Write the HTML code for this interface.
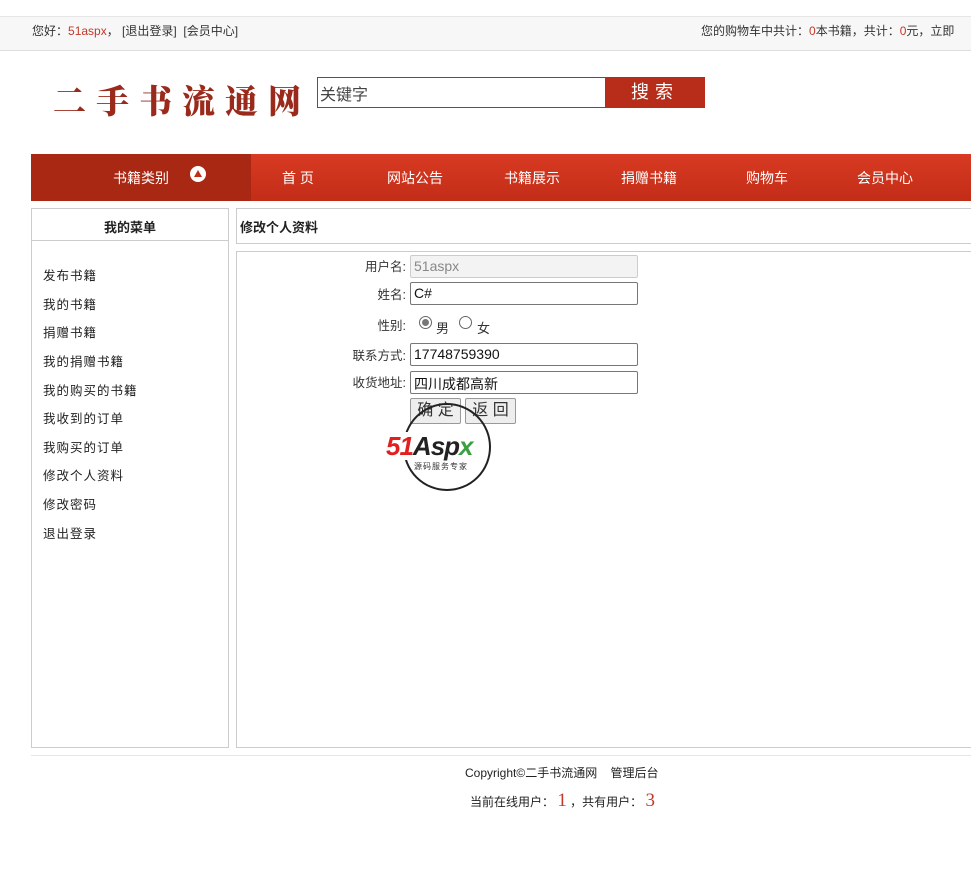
<!DOCTYPE html>
<html><head><meta charset="utf-8"><style>
*{margin:0;padding:0;box-sizing:border-box}
body{width:971px;height:894px;background:#fff;font-family:"Liberation Sans","Noto Sans CJK SC",sans-serif;font-size:12px;color:#333;position:relative;overflow:hidden}
.abs{position:absolute}
.top{left:0;top:16px;width:971px;height:35px;background:#f7f7f7;border-top:1px solid #e6e6e6;border-bottom:1px solid #ddd}
.red{color:#c0392b}
.nav{left:31px;top:154px;width:940px;height:47px;background:linear-gradient(#d83a22,#c22d18)}
.nav span{position:absolute;top:14px;color:#fff;font-size:14px}
.box{border:1px solid #ccc}
.menu div{position:absolute;left:11px;font-size:12.5px;letter-spacing:1px;color:#222}
.lbl{position:absolute;text-align:right;width:120px;left:286px;font-size:12.5px;color:#333}
.inp{position:absolute;left:410px;width:228px;height:23px;border:1px solid #777;border-radius:2px;font-size:14px;padding:2px 3px;color:#111}
.btn{position:absolute;top:398px;height:26px;border:1px solid #999;background:#eee;font-size:16px;text-align:center;line-height:24px;border-radius:2px}
</style></head><body>
<div class="abs top"></div>
<div class="abs" style="left:32px;top:22px">您好：<span class="red">51aspx</span>， [退出登录]&nbsp; [会员中心]</div>
<div class="abs" style="left:701px;top:22px;white-space:nowrap">您的购物车中共计：<span class="red">0</span>本书籍，共计：<span class="red">0</span>元，立即</div>
<div class="abs" style="left:53px;top:76px;font-family:'Noto Serif CJK SC',serif;font-weight:900;font-size:33px;color:#9a2a1c;letter-spacing:10px">二手书流通网</div>
<div class="abs" style="left:317px;top:77px;width:290px;height:31px;border:1px solid #9a3a2a;font-size:16px;padding:3px 2px;color:#444">关键字</div>
<div class="abs" style="left:605px;top:77px;width:100px;height:31px;background:#b72d1a;color:#fff;font-size:18px;text-align:center;line-height:31px;letter-spacing:6px">搜索</div>
<div class="abs nav">
<div class="abs" style="left:0;top:0;width:220px;height:47px;background:#a82814"></div>
<span style="left:82px">书籍类别</span>
<div class="abs" style="left:159px;top:12px;width:16px;height:16px;border-radius:50%;background:#fff"><div class="abs" style="left:4px;top:4px;border-left:4px solid transparent;border-right:4px solid transparent;border-bottom:7px solid #c22d18"></div></div>
<span style="left:251px">首 页</span><span style="left:356px">网站公告</span><span style="left:473px">书籍展示</span><span style="left:590px">捐赠书籍</span><span style="left:715px">购物车</span><span style="left:826px">会员中心</span>
</div>
<div class="abs box menu" style="left:31px;top:208px;width:198px;height:540px">
<div style="left:0;top:0;width:196px;height:32px;border-bottom:1px solid #ccc;text-align:center;line-height:38px;font-weight:bold;font-size:13px;letter-spacing:0">我的菜单</div>
<div style="top:56px">发布书籍</div><div style="top:85px">我的书籍</div><div style="top:113px">捐赠书籍</div><div style="top:142px">我的捐赠书籍</div><div style="top:171px">我的购买的书籍</div><div style="top:199px">我收到的订单</div><div style="top:228px">我购买的订单</div><div style="top:256px">修改个人资料</div><div style="top:285px">修改密码</div><div style="top:314px">退出登录</div>
</div>
<div class="abs box" style="left:236px;top:208px;width:740px;height:36px;font-weight:bold;font-size:13px;padding:8px 3px;color:#222">修改个人资料</div>
<div class="abs box" style="left:236px;top:251px;width:740px;height:497px"></div>
<div class="lbl" style="top:256px">用户名:</div><div class="inp" style="top:255px;background:#f3f3f3;border-color:#ccc;color:#888">51aspx</div>
<div class="lbl" style="top:284px">姓名:</div><div class="inp" style="top:282px">C#</div>
<div class="lbl" style="top:315px">性别:</div>
<div class="abs" style="left:419px;top:316px;width:13px;height:13px;border-radius:50%;border:1px solid #666"><div class="abs" style="left:2px;top:2px;width:7px;height:7px;border-radius:50%;background:#777"></div></div>
<div class="abs" style="left:436px;top:318px;font-size:13px">男</div>
<div class="abs" style="left:459px;top:316px;width:13px;height:13px;border-radius:50%;border:1px solid #666"></div>
<div class="abs" style="left:477px;top:318px;font-size:13px">女</div>
<div class="lbl" style="top:345px">联系方式:</div><div class="inp" style="top:343px">17748759390</div>
<div class="lbl" style="top:372px">收货地址:</div><div class="inp" style="top:371px">四川成都高新</div>
<div class="btn" style="left:410px;width:51px">确 定</div><div class="btn" style="left:465px;width:51px">返 回</div>
<div class="abs" style="left:403px;top:403px;width:88px;height:88px;border-radius:50%;border:2px solid #222"></div>
<div class="abs" style="left:386px;top:432px;font-size:26px;font-weight:bold;font-style:italic;background:#fff;line-height:28px;letter-spacing:-1px"><span style="color:#e02020">51</span><span style="color:#222">Asp</span><span style="color:#3aa040">x</span></div>
<div class="abs" style="left:414px;top:461px;font-size:8px;color:#333;background:#fff;letter-spacing:1px">源码服务专家</div>
<div class="abs" style="left:31px;top:755px;width:940px;border-top:1px solid #e5e5e5"></div>
<div class="abs" style="left:465px;top:764px;color:#222">Copyright©二手书流通网 &nbsp;&nbsp; 管理后台</div>
<div class="abs" style="left:470px;top:790px;color:#222">当前在线用户： <span style="color:#c0392b;font-size:19px;font-family:'Liberation Serif',serif">1</span> ，共有用户： <span style="color:#c0392b;font-size:19px;font-family:'Liberation Serif',serif">3</span></div>
</body></html>
